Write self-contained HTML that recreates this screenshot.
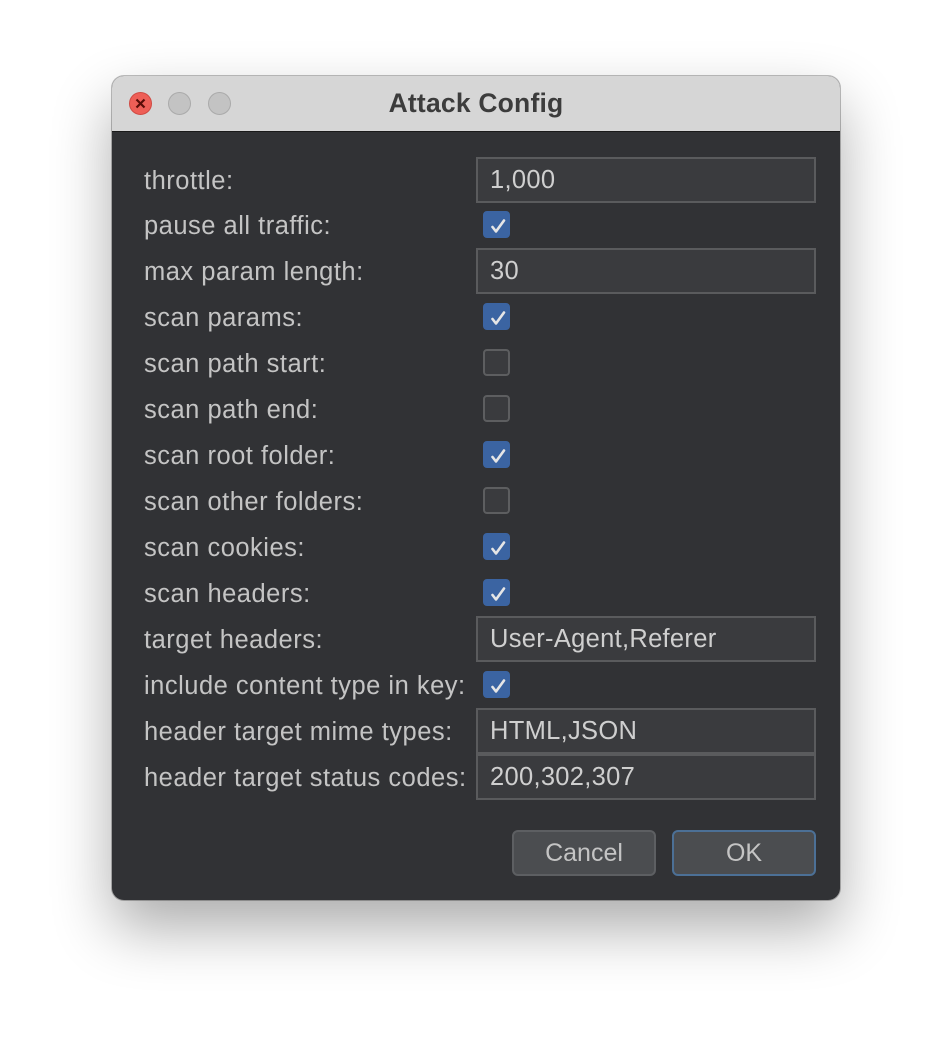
<!DOCTYPE html>
<html><head><style>
body{margin:0;width:952px;height:1048px;background:#fff;position:relative;font-family:"Liberation Sans",Arial,sans-serif;overflow:hidden}
.win{position:absolute;left:112px;top:76px;width:728px;height:824px;border-radius:12px;background:#313235;box-shadow:0 28px 60px rgba(0,0,0,.33),0 0 0 1px rgba(0,0,0,.25);overflow:hidden}
.tb{position:absolute;left:0;top:0;width:728px;height:55px;background:#d6d6d6;border-bottom:1px solid #1a1a1a}
.tt{position:absolute;left:0;width:728px;top:12px;text-align:center;font-weight:bold;font-size:26.5px;color:#3c3c3c;letter-spacing:.2px}
.dot{position:absolute;top:16px;width:23px;height:23px;border-radius:50%;background:#c3c3c3;border:1px solid #aaa;box-sizing:border-box}
.lab{position:absolute;left:32px;font-size:25.5px;color:#c4c4c4;line-height:28px;letter-spacing:.5px;margin-top:2px}
.f{position:absolute;left:364px;width:340px;height:46px;box-sizing:border-box;border:2px solid #5a5b5d;background:#3a3b3e;color:#cfcfcf;font-size:25.5px;padding-left:12px;line-height:42px;letter-spacing:.3px}
.cb{position:absolute;left:371px;width:27px;height:27px;box-sizing:border-box;border-radius:4px;border:2px solid #5d5e60;background:#3a3b3e}
.cb.on{background:#3b64a2;border-color:#3b64a2}
.cb svg{position:absolute;left:2px;top:2px}
.btn{position:absolute;top:754px;width:144px;height:46px;box-sizing:border-box;border-radius:6px;border:2px solid #5d5f62;background:#4b4d50;color:#c4c4c4;font-size:25px;text-align:center;line-height:42px}
</style></head><body>
<div class="win">
<div class="tb">
<div class="dot" style="left:17px;background:#ee5f57;border-color:#d04a43"><svg width="21" height="21" viewBox="0 0 21 21"><path d="M6.5 6.5l8 8M14.5 6.5l-8 8" stroke="#5a0d08" stroke-width="2.2"/></svg></div>
<div class="dot" style="left:56px"></div>
<div class="dot" style="left:96px"></div>
<div class="tt">Attack Config</div>
</div>
<div class="lab" style="top:89px">throttle:</div><div class="f" style="top:81px">1,000</div>
<div class="lab" style="top:134px">pause all traffic:</div><div class="cb on" style="top:135px"><svg width="23" height="23"><path d="M5.5 12l3.5 4.5 8-11" fill="none" stroke="#e6e6e6" stroke-width="2.6" stroke-linecap="round" stroke-linejoin="round"/></svg></div>
<div class="lab" style="top:180px">max param length:</div><div class="f" style="top:172px">30</div>
<div class="lab" style="top:226px">scan params:</div><div class="cb on" style="top:227px"><svg width="23" height="23"><path d="M5.5 12l3.5 4.5 8-11" fill="none" stroke="#e6e6e6" stroke-width="2.6" stroke-linecap="round" stroke-linejoin="round"/></svg></div>
<div class="lab" style="top:272px">scan path start:</div><div class="cb" style="top:273px"></div>
<div class="lab" style="top:318px">scan path end:</div><div class="cb" style="top:319px"></div>
<div class="lab" style="top:364px">scan root folder:</div><div class="cb on" style="top:365px"><svg width="23" height="23"><path d="M5.5 12l3.5 4.5 8-11" fill="none" stroke="#e6e6e6" stroke-width="2.6" stroke-linecap="round" stroke-linejoin="round"/></svg></div>
<div class="lab" style="top:410px">scan other folders:</div><div class="cb" style="top:411px"></div>
<div class="lab" style="top:456px">scan cookies:</div><div class="cb on" style="top:457px"><svg width="23" height="23"><path d="M5.5 12l3.5 4.5 8-11" fill="none" stroke="#e6e6e6" stroke-width="2.6" stroke-linecap="round" stroke-linejoin="round"/></svg></div>
<div class="lab" style="top:502px">scan headers:</div><div class="cb on" style="top:503px"><svg width="23" height="23"><path d="M5.5 12l3.5 4.5 8-11" fill="none" stroke="#e6e6e6" stroke-width="2.6" stroke-linecap="round" stroke-linejoin="round"/></svg></div>
<div class="lab" style="top:548px">target headers:</div><div class="f" style="top:540px">User-Agent,Referer</div>
<div class="lab" style="top:594px">include content type in key:</div><div class="cb on" style="top:595px"><svg width="23" height="23"><path d="M5.5 12l3.5 4.5 8-11" fill="none" stroke="#e6e6e6" stroke-width="2.6" stroke-linecap="round" stroke-linejoin="round"/></svg></div>
<div class="lab" style="top:640px">header target mime types:</div><div class="f" style="top:632px">HTML,JSON</div>
<div class="lab" style="top:686px">header target status codes:</div><div class="f" style="top:678px">200,302,307</div>
<div class="btn" style="left:400px">Cancel</div>
<div class="btn" style="left:560px;border-color:#4c7096">OK</div>
</div>
</body></html>
